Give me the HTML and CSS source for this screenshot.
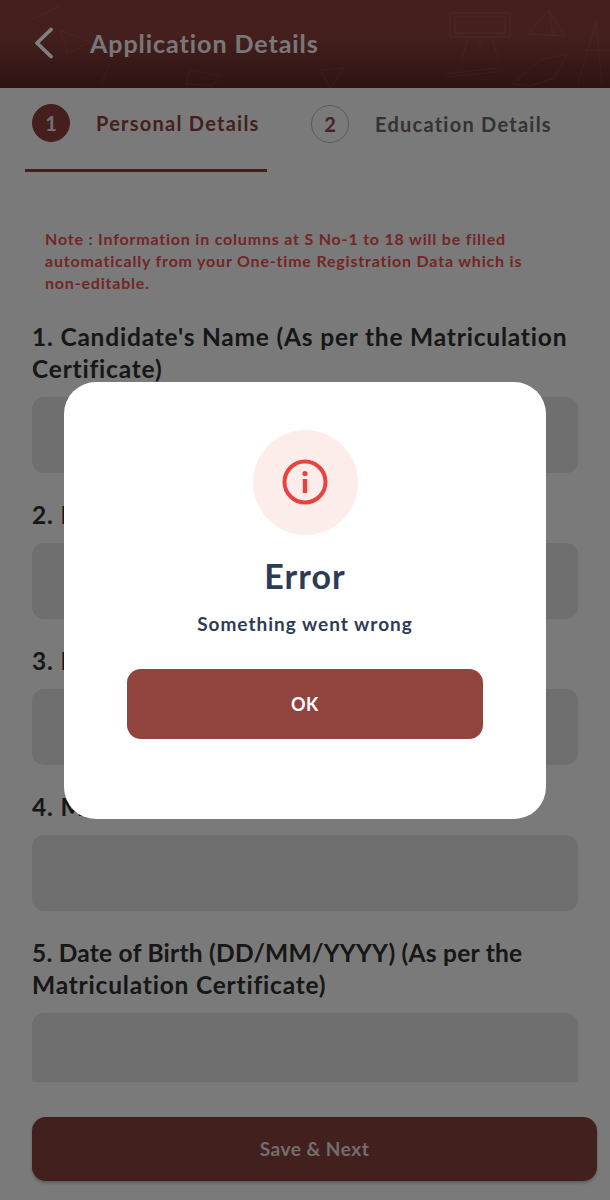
FILE: index.html
```html
<!DOCTYPE html>
<html lang="en">
<head>
    <meta charset="UTF-8">
    <meta name="viewport" content="width=device-width, initial-scale=1.0">
    <title>Application Details</title>
    <link rel="stylesheet" href="styles.css">
</head>
<body>
    <div class="page">
        <header class="topbar">
            <svg class="topbar-art" width="610" height="88" viewBox="0 0 610 88" fill="none" stroke="#fff" stroke-width="1">
                <path d="M450 13h60v24h-60zM455 17h50v16h-50zM468 37l-6 22M492 37l6 22M480 37v14"/>
                <path d="M549 10l-21 24 37 2zM549 10l4 25"/>
                <path d="M596 22l-18 62M596 22l6 62M582 50l28 0"/>
                <path d="M512 84l28-24 28-6-14 24-24 8zM445 74l50-6 2 4-50 5"/>
                <path d="M30 20l30-14M60 30l30 12-22 12zM190 70l30 6-8 10-26-2zM100 85l10-20M320 70l10 18 14-20z"/>
            </svg>
            <svg class="back-icon" width="20" height="32" viewBox="0 0 20 32" fill="none" stroke="#fff" stroke-width="3.8" stroke-linecap="round" stroke-linejoin="round">
                <path d="M17 2.5L3 16l14 13.5"/>
            </svg>
            <h1>Application Details</h1>
        </header>

        <nav class="steps">
            <div class="step step-active">
                <span class="step-num">1</span>
                <span class="step-name">Personal Details</span>
            </div>
            <div class="step">
                <span class="step-num">2</span>
                <span class="step-name">Education Details</span>
            </div>
        </nav>

        <main class="form">
            <p class="note">Note : Information in columns at S No-1 to 18 will be filled automatically from your One-time Registration Data which is non-editable.</p>

            <div class="field">
                <label>1. Candidate's Name (As per the Matriculation Certificate)</label>
                <div class="input"></div>
            </div>
            <div class="field">
                <label>2. Father's Name</label>
                <div class="input"></div>
            </div>
            <div class="field">
                <label>3. Mother's Name</label>
                <div class="input"></div>
            </div>
            <div class="field">
                <label>4. Mobile Number</label>
                <div class="input"></div>
            </div>
            <div class="field">
                <label><span class="label-tight">5. Date of Birth (DD/MM/YYYY) (As per the</span> Matriculation Certificate)</label>
                <div class="input"></div>
            </div>
        </main>

        <footer class="actions">
            <button type="button" class="save-btn">Save &amp; Next</button>
        </footer>
    </div>

    <div class="overlay">
        <div class="modal">
            <div class="modal-icon">
                <svg width="46" height="46" viewBox="0 0 46 46" fill="none">
                    <circle cx="23" cy="23" r="20.5" stroke="#e8413e" stroke-width="4"/>
                    <rect x="20.8" y="20" width="4.4" height="14" fill="#e8413e"/>
                    <circle cx="23" cy="14.5" r="2.6" fill="#e8413e"/>
                </svg>
            </div>
            <h2>Error</h2>
            <p>Something went wrong</p>
            <button type="button" class="ok-btn">OK</button>
        </div>
    </div>
</body>
</html>
```

FILE: styles.css
```css
* {
    box-sizing: border-box;
}
body {
    font-family: 'Lato', 'Noto Sans', sans-serif;
    background-color: #f4f4f4;
    margin: 0;
    padding: 0;
}
.page {
    height: 1200px;
    display: flex;
    flex-direction: column;
    overflow: hidden;
}
.topbar {
    position: relative;
    height: 88px;
    flex: none;
    display: flex;
    align-items: center;
    padding: 0 0 3px 34px;
    background: linear-gradient(#8a3f3b 40%, #5c2826);
    color: #fff;
    overflow: hidden;
}
.topbar-art {
    position: absolute;
    top: 0;
    left: 0;
    opacity: 0.07;
}
.back-icon {
    flex: none;
}
.topbar h1 {
    margin: 0 0 0 36px;
    font-size: 25px;
    font-weight: 700;
    letter-spacing: 0.95px;
    color: #f2f0f0;
}
.steps {
    flex: none;
    height: 84px;
    display: flex;
    padding-left: 25px;
    background: #f4f4f4;
}
.step {
    display: flex;
    align-items: center;
    height: 84px;
    padding: 0 7px 12px;
    gap: 26px;
    width: 242px;
    margin-right: 37px;
    font-size: 20px;
    font-weight: 700;
    letter-spacing: 1.25px;
    color: #6a6464;
}
.step-name {
    white-space: nowrap;
}
.step-active {
    color: #8a3f3b;
    border-bottom: 3px solid #8a3f3b;
}
.step-num {
    flex: none;
    width: 38px;
    height: 38px;
    border-radius: 50%;
    border: 1.5px solid #b5b5b5;
    display: flex;
    align-items: center;
    justify-content: center;
    color: #8a4a47;
    font-weight: 700;
    letter-spacing: 0;
}
.step-active .step-num {
    background: #8a3f3b;
    border-color: #8a3f3b;
    color: #e8e0e0;
}
.form {
    flex: none;
    height: 910px;
    padding: 56px 32px 0;
    overflow: hidden;
}
.note {
    margin: 0 24px 27px 13px;
    font-size: 16px;
    line-height: 22px;
    font-weight: 700;
    letter-spacing: 0.8px;
    color: #e84c4c;
}
.field {
    margin-bottom: 26px;
}
.field label {
    display: block;
    font-size: 24.5px;
    line-height: 32px;
    font-weight: 700;
    letter-spacing: 0.8px;
    color: #2e2e2e;
}
.label-tight {
    letter-spacing: 0.25px;
}
.input {
    height: 76px;
    margin-top: 12px;
    background: #dedede;
    border-radius: 12px;
}
.actions {
    flex: none;
    padding: 35px 13px 0 32px;
}
.save-btn {
    display: block;
    width: 100%;
    height: 64px;
    padding-bottom: 2px;
    border: none;
    border-radius: 14px;
    background: #85403b;
    color: #e6dddc;
    font-family: inherit;
    font-size: 19px;
    font-weight: 700;
    letter-spacing: 0.5px;
    box-shadow: 0 2px 3px rgba(0,0,0,0.25);
}
.overlay {
    position: fixed;
    top: 0;
    left: 0;
    width: 100%;
    height: 100%;
    display: flex;
    align-items: center;
    justify-content: center;
    background: rgba(0,0,0,0.5);
}
.modal {
    width: 482px;
    height: 437px;
    padding-top: 48px;
    background: #fff;
    border-radius: 32px;
    display: flex;
    flex-direction: column;
    align-items: center;
}
.modal-icon {
    width: 105px;
    height: 105px;
    border-radius: 50%;
    background: #fcecea;
    display: flex;
    align-items: center;
    justify-content: center;
}
.modal h2 {
    margin: 20px 0 0;
    font-size: 34px;
    line-height: 42px;
    font-weight: 700;
    letter-spacing: 1px;
    color: #2e3b55;
}
.modal p {
    margin: 14px 0 0;
    font-size: 19px;
    line-height: 26px;
    font-weight: 700;
    letter-spacing: 1px;
    color: #2e3b55;
}
.ok-btn {
    width: 356px;
    height: 70px;
    margin-top: 32px;
    border: none;
    border-radius: 14px;
    background: #91433e;
    color: #fff;
    font-family: inherit;
    font-size: 18px;
    font-weight: 700;
    letter-spacing: 0.5px;
}
```
